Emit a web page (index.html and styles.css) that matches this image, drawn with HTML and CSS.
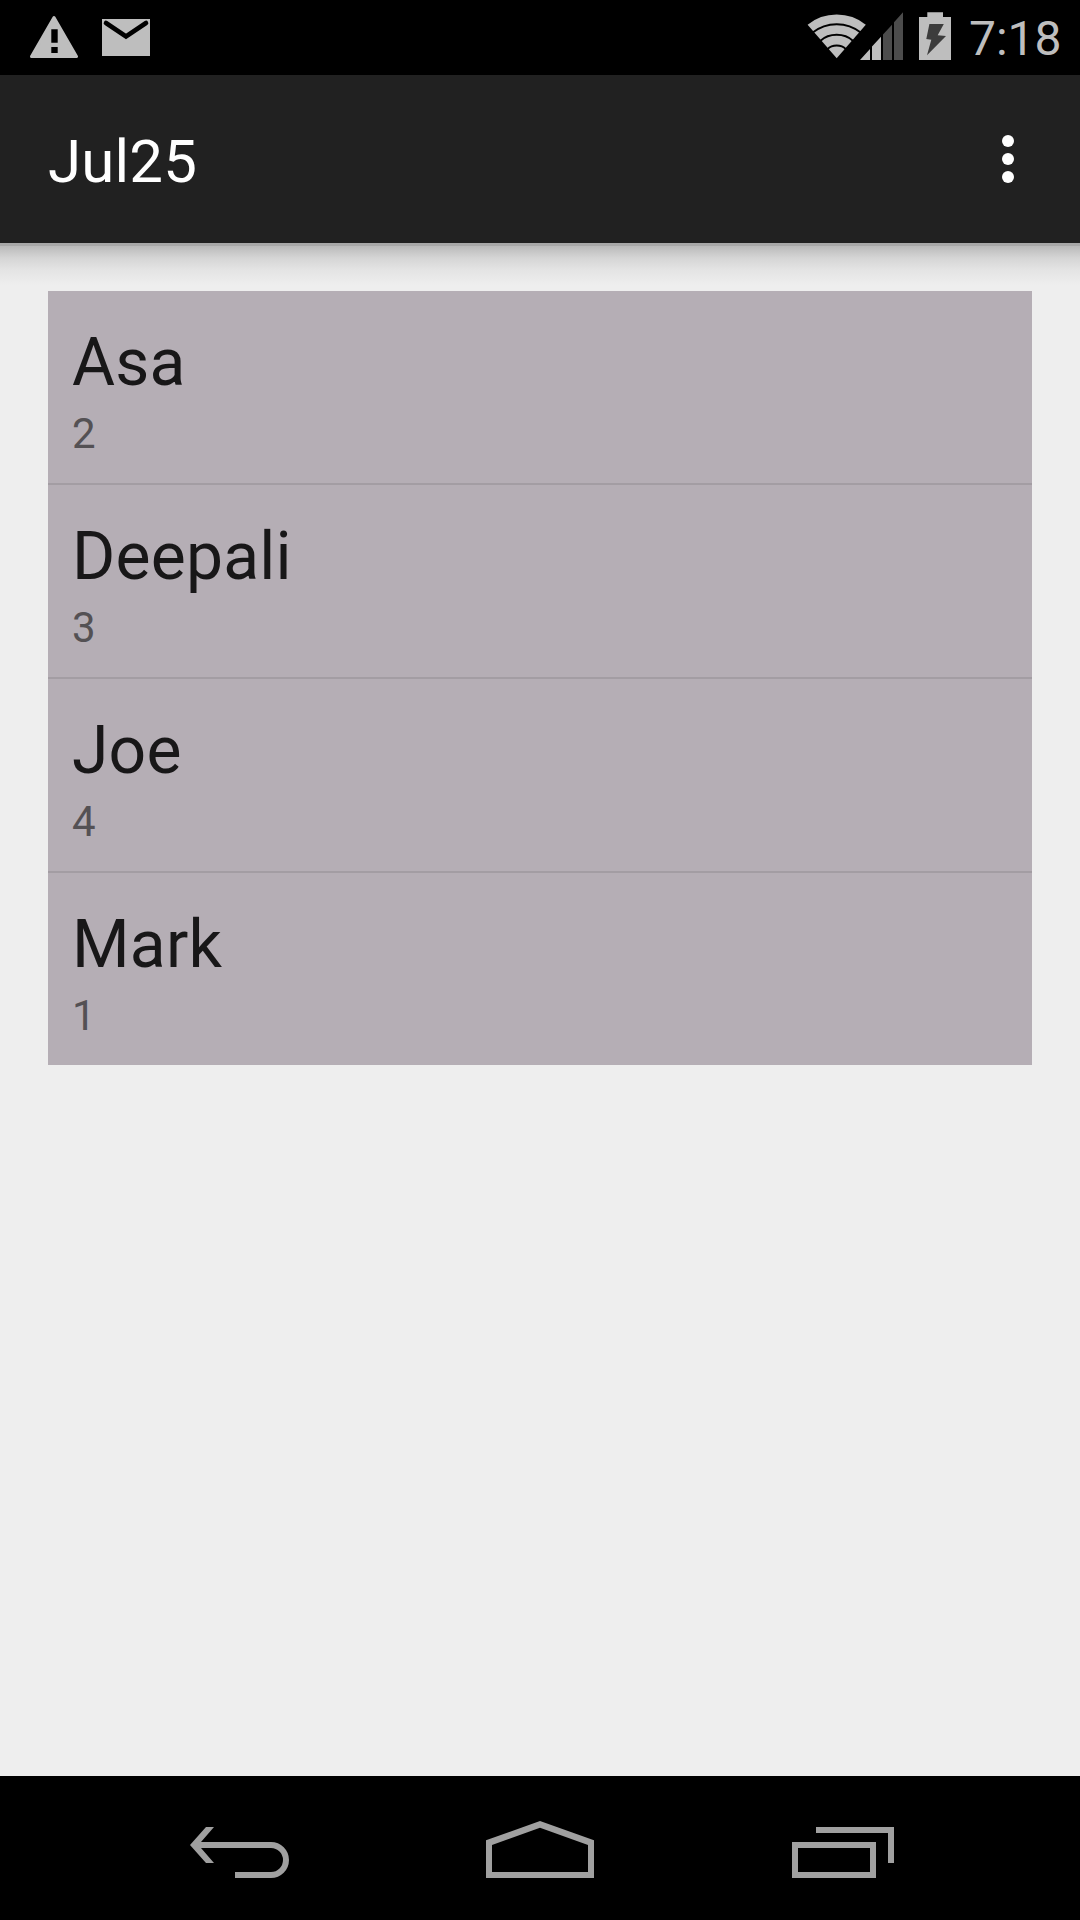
FILE: index.html
```html
<!DOCTYPE html>
<html lang="en">
<head>
    <meta charset="UTF-8">
    <meta name="viewport" content="width=device-width, initial-scale=1.0">
    <title>Jul25</title>
    <link rel="stylesheet" href="styles.css">
</head>
<body>
    <div class="status-bar">
        <svg class="warning" width="48" height="75" viewBox="0 0 48 75">
            <path d="M24 17.5L46.5 56.5H1.5Z" fill="#bebebe" stroke="#bebebe" stroke-width="3" stroke-linejoin="round"/>
            <path d="M21.3 29.3h6.4v13.4h-6.4zM21.3 47h6.4v6h-6.4z" fill="#000"/>
        </svg>
        <svg class="mail" width="48" height="75" viewBox="0 0 48 75">
            <rect y="19" width="48" height="37" fill="#bebebe"/>
            <path d="M4 23L24 36.5L44 23" fill="none" stroke="#000" stroke-width="4.6" stroke-linecap="round"/>
        </svg>
        <div class="status-right">
            <svg class="wifi" width="60" height="75" viewBox="0 0 60 75">
                <path d="M29.7 58.3L.6 24.7Q13 14.5 29.7 14.5T58.8 24.7Z" fill="#bebebe"/>
                <g fill="none" stroke="#000" stroke-width="2">
                    <path d="M5.7 32.6Q16 24.2 29.7 24.2T53.7 32.6"/>
                    <path d="M13.2 41Q20 34.8 29.7 34.8T46.2 41"/>
                    <path d="M20.5 49.2Q24 45.6 29.7 45.6T38.9 49.2"/>
                </g>
            </svg>
            <svg class="signal" width="43" height="75" viewBox="0 0 43 75">
                <path d="M0 60L10 49V60zM12 60V46.6L21 36.7V60z" fill="#bebebe"/>
                <path d="M23 60V34.5L32 24.7V60zM34 60V22.3L43 12.3V60z" fill="#4c4c4c"/>
            </svg>
            <svg class="battery" width="32" height="75" viewBox="0 0 32 75">
                <path d="M8.3 12.2H24V17h8v43H0V17h8.3z" fill="#bebebe"/>
                <path d="M10.4 24H24.8L18.7 35.2L27 36L8 55.3L12.3 39.8L7.3 39z" fill="#3c3c3c"/>
            </svg>
            <span class="clock">7:18</span>
        </div>
    </div>

    <div class="action-bar">
        <h1>Jul25</h1>
        <div class="overflow">
            <span></span>
            <span></span>
            <span></span>
        </div>
    </div>

    <div class="content">
        <ul class="list">
            <li>
                <div class="name">Asa</div>
                <div class="number">2</div>
            </li>
            <li>
                <div class="name">Deepali</div>
                <div class="number">3</div>
            </li>
            <li>
                <div class="name">Joe</div>
                <div class="number">4</div>
            </li>
            <li>
                <div class="name">Mark</div>
                <div class="number">1</div>
            </li>
        </ul>
    </div>

    <div class="nav-bar">
        <svg width="108" height="60" viewBox="0 0 108 60">
            <path d="M4 25L20 7H28L15 22H85A18 18 0 0 1 85 58H49V52H85A12 12 0 0 0 85 28H15L28 43H20Z"/>
        </svg>
        <svg width="108" height="60" viewBox="0 0 108 60">
            <path d="M54 1L108 20.3V58H0V20.3ZM54 7.7L6 25V52H102V25Z" fill-rule="evenodd"/>
        </svg>
        <svg width="108" height="60" viewBox="0 0 108 60">
            <path d="M30 7H108V43H102V13H30ZM6 22H90V58H6ZM12 28V52H84V28Z" fill-rule="evenodd"/>
        </svg>
    </div>
</body>
</html>
```
FILE: styles.css
```css
body {
    margin: 0;
    width: 1080px;
    height: 1920px;
    display: flex;
    flex-direction: column;
    background-color: #eeeeee;
    font-family: Roboto, sans-serif;
    overflow: hidden;
}
svg {
    display: block;
    flex: none;
}
.status-bar {
    display: flex;
    height: 75px;
    padding: 0 19px 0 30px;
    background-color: #000;
}
.mail {
    margin-left: 24px;
}
.status-right {
    display: flex;
    margin-left: auto;
}
.signal {
    margin-left: -7px;
}
.battery {
    margin-left: 16px;
}
.clock {
    width: 92px;
    margin-left: 18px;
    font-size: 48px;
    line-height: 78px;
    color: #bebebe;
    white-space: nowrap;
}
.action-bar {
    display: flex;
    justify-content: space-between;
    height: 168px;
    padding: 0 66px 0 48px;
    background-color: #212121;
}
.action-bar h1 {
    margin: 0;
    font-size: 60px;
    font-weight: 400;
    line-height: 174px;
    letter-spacing: 0.2px;
    color: #fff;
}
.overflow {
    display: flex;
    flex-direction: column;
    gap: 6px;
    padding-top: 60px;
}
.overflow span {
    width: 12px;
    height: 12px;
    border-radius: 50%;
    background-color: #fff;
}
.content {
    flex: 1;
    padding: 48px;
    background-image: linear-gradient(#a8a8a8 3px, #bababa 3px, #d5d5d5 15px, #e4e4e4 27px, #eeeeee 42px);
    background-repeat: no-repeat;
}
.list {
    margin: 0;
    padding: 0;
    list-style: none;
    background-color: #b5aeb5;
}
.list li {
    height: 192px;
    padding: 33px 24px 0;
    box-sizing: border-box;
}
.list li + li {
    height: 194px;
    border-top: 2px solid #a39da3;
}
.name {
    font-size: 66px;
    line-height: 78px;
    letter-spacing: 0.2px;
    color: #181718;
}
.number {
    margin-top: 7px;
    font-size: 42px;
    line-height: 49px;
    color: #545154;
}
.nav-bar {
    display: flex;
    justify-content: center;
    gap: 192px;
    height: 100px;
    padding-top: 44px;
    background-color: #000;
    fill: #a0a0a0;
}
```
